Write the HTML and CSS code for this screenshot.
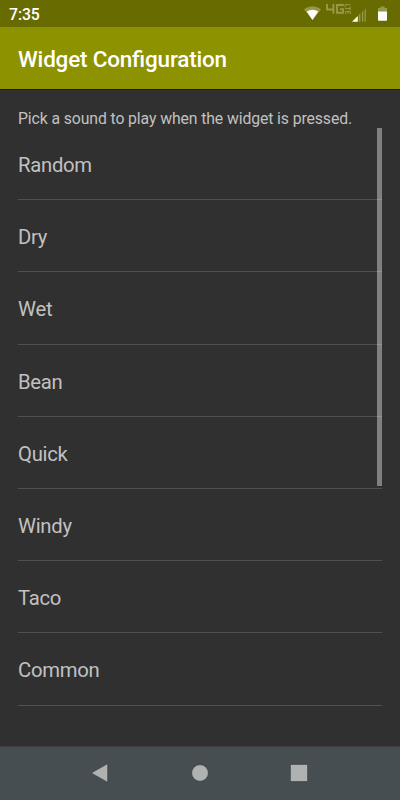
FILE: index.html
```html
<!DOCTYPE html>
<html lang="en">
<head>
  <meta charset="UTF-8" />
  <meta name="viewport" content="width=device-width, initial-scale=1.0"/>
  <title>Widget Configuration</title>
  <link rel="stylesheet" href="styles.css">
</head>
<body>
  <div class="status-bar">
    <span class="clock">7:35</span>
    <svg class="status-icons" width="90" height="26" viewBox="0 0 90 26">
      <!-- wifi -->
      <path d="M4 9.2Q12.5 3.4 21 9.2L12.5 20Z" fill="#96994a"/>
      <path d="M6.7 11.6Q12.5 7.9 18.3 11.6L12.5 20Z" fill="#fff"/>
      <!-- 4G LTE -->
      <g fill="none" stroke="#979a4a" stroke-width="1.9">
        <path d="M27 4V9.5H34.4M33.4 4V13.8"/>
        <path d="M43.8 5H37V12.7H43V9.1H40"/>
      </g>
      <g fill="none" stroke="#979a4a" stroke-width="1">
        <path d="M45.2 4.6H50.4M45.2 7.2V4.5"/>
        <path d="M45.2 8.5H50.4M50 6.8V10.2"/>
        <path d="M45.7 14V11.4H50.3V14M48 11.4V13.6"/>
      </g>
      <!-- signal -->
      <path d="M52 21.8L57.8 16V21.8Z" fill="#fff"/>
      <path d="M58.8 15L60.4 13.4V21.8H58.8ZM62 12L63.3 10.7V21.8H62ZM64.6 9.8L65.8 8.6V21.8H64.6Z" fill="#979a4a"/>
      <!-- battery -->
      <path d="M78 9.5V8H80.4V6.5H84.6V8H87V12H78Z" fill="#96994a"/>
      <path d="M78 11.5H87V20Q87 20.8 86.2 20.8H78.8Q78 20.8 78 20Z" fill="#fff"/>
    </svg>
  </div>

  <header>
    <h1>Widget Configuration</h1>
  </header>

  <main class="container">
    <p class="hint">Pick a sound to play when the widget is pressed.</p>
    <div class="list">
      <ul class="sounds">
        <li>Random</li>
        <li>Dry</li>
        <li>Wet</li>
        <li>Bean</li>
        <li>Quick</li>
        <li>Windy</li>
        <li>Taco</li>
        <li>Common</li>
      </ul>
      <div class="scrollbar"></div>
    </div>
  </main>

  <nav class="nav-bar">
    <svg width="18" height="20" viewBox="0 0 18 20">
      <path d="M1.2 9.5L16.6 .8V19.2L1.2 10.5Q.6 10 1.2 9.5Z" fill="#b0b2b1" stroke="#36393b" stroke-width="0.5"/>
    </svg>
    <svg width="18" height="20" viewBox="0 0 18 20">
      <circle cx="9" cy="10" r="8.3" fill="#b0b2b1" stroke="#36393b" stroke-width="0.5"/>
    </svg>
    <svg width="18" height="20" viewBox="0 0 18 20">
      <rect x=".4" y="1.4" width="17.2" height="17.2" rx="1" fill="#b0b2b1" stroke="#36393b" stroke-width="0.6"/>
    </svg>
  </nav>
</body>
</html>
```
FILE: styles.css
```css
* {
  box-sizing: border-box;
}

body {
  font-family: Roboto, sans-serif;
  background: #303030;
  color: #c1c1c1;
  margin: 0;
  height: 800px;
  display: flex;
  flex-direction: column;
  overflow: hidden;
}

.status-bar {
  height: 27px;
  flex: none;
  background: #686b00;
  color: #fff;
  display: flex;
  justify-content: space-between;
  padding: 0 10px 0 9px;
}

.clock {
  font-size: 15.8px;
  font-weight: 500;
  line-height: 29px;
  letter-spacing: -0.1px;
}

.status-icons {
  flex: none;
}

header {
  height: 63px;
  flex: none;
  background: #8d9200;
  border-bottom: 1px solid #1c1c20;
  color: #fff;
  padding: 0 18px;
}

h1 {
  margin: 0;
  font-size: 22.5px;
  font-weight: 500;
  line-height: 64px;
  letter-spacing: -0.2px;
  font-feature-settings: "liga" 1;
}

.container {
  flex: 1;
  padding: 18px 18px 0;
}

.hint {
  margin: 0;
  height: 20px;
  font-size: 15.8px;
  line-height: 21px;
  letter-spacing: -0.11px;
}

.list {
  position: relative;
}

.sounds {
  list-style: none;
  margin: 0;
  padding: 0;
}

.sounds li {
  height: 72.2px;
  border-bottom: 1px solid #505050;
  font-size: 20.3px;
  line-height: 74px;
  letter-spacing: -0.28px;
}

/* scroll thumb sits over the right end of the rows */
.scrollbar {
  position: absolute;
  top: 0;
  right: 0;
  width: 5px;
  height: 358px;
  background: rgba(255, 255, 255, 0.39);
}

.nav-bar {
  height: 54px;
  flex: none;
  background: #464e52;
  border-top: 1px solid #3d4041;
  display: flex;
  justify-content: space-between;
  align-items: center;
  padding: 0 92px 1px 91px;
}
```
